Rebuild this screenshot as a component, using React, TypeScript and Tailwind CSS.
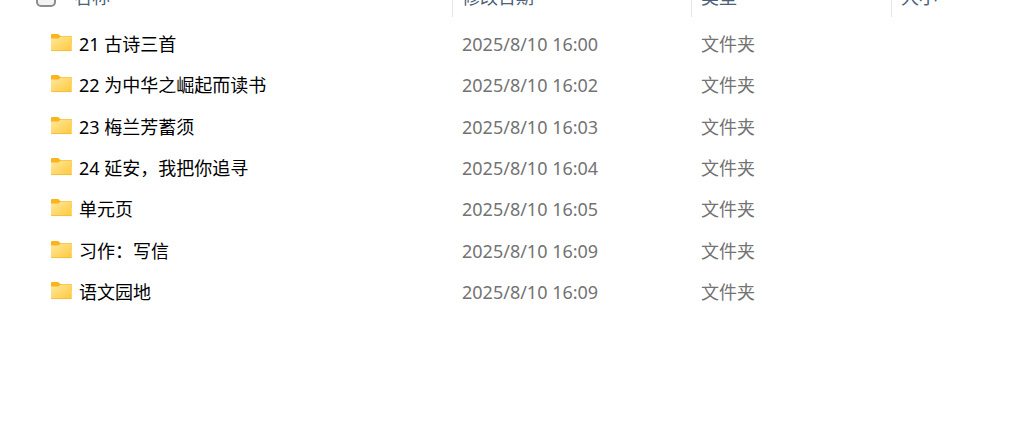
import React, { useState } from "react";

const files = [
  { name: "21 古诗三首", modified: "2025/8/10 16:00", type: "文件夹" },
  { name: "22 为中华之崛起而读书", modified: "2025/8/10 16:02", type: "文件夹" },
  { name: "23 梅兰芳蓄须", modified: "2025/8/10 16:03", type: "文件夹" },
  { name: "24 延安，我把你追寻", modified: "2025/8/10 16:04", type: "文件夹" },
  { name: "单元页", modified: "2025/8/10 16:05", type: "文件夹" },
  { name: "习作：写信", modified: "2025/8/10 16:09", type: "文件夹" },
  { name: "语文园地", modified: "2025/8/10 16:09", type: "文件夹" },
];

function FolderIcon() {
  return (
    <svg width="22" height="20" viewBox="-0.5 0 22 20" className="shrink-0" aria-hidden="true">
      <defs>
        <linearGradient id="folder-front" x1="0" y1="0" x2="1" y2="1">
          <stop offset="0" stopColor="#ffe8a0" />
          <stop offset="1" stopColor="#fec93a" />
        </linearGradient>
      </defs>
      <path
        d="M0.5 1Q0.5 0 1.5 0H7.2Q7.9 0 8.4 0.6L9.7 2H20.5Q21.3 2 21.3 3V9H0.5Z"
        fill="#fab51d"
      />
      <path
        d="M0.5 4.6H7.4Q8.1 4.6 8.6 4.1L9.7 3Q10.1 2.6 10.8 2.6H20.5Q21.3 2.6 21.3 3.4V16.2Q21.3 17 20.5 17H1.3Q0.5 17 0.5 16.2Z"
        fill="url(#folder-front)"
      />
      <path d="M0.7 16.6H21.1" fill="none" stroke="#edb43c" strokeWidth="0.7" />
    </svg>
  );
}

function HeaderCell({ label, divider = true, children }: any) {
  return (
    <th scope="col" className="p-0 pb-[6px] font-normal">
      <div
        className={
          divider
            ? "flex h-[17px] items-end overflow-hidden border-r border-[#e5e5e5]"
            : "flex h-[17px] items-end overflow-hidden"
        }
      >
        {children}
        <button type="button" className="pb-2 pl-[9px] text-left leading-6 text-[#4c607a]">
          {label}
        </button>
      </div>
    </th>
  );
}

export default function App() {
  const [allChecked, setAllChecked] = useState(false);

  return (
    <main className="min-h-screen bg-white font-['Noto_Sans','Noto_Sans_CJK_SC',sans-serif] text-[18px]">
      <table className="h-[313px] w-full table-fixed border-collapse text-left">
        <colgroup>
          <col className="w-[453px]" />
          <col className="w-[239px]" />
          <col className="w-[200px]" />
          <col />
        </colgroup>
        <thead>
          <tr>
            <HeaderCell label="名称">
              <input
                type="checkbox"
                aria-label="全选"
                checked={allChecked}
                onChange={() => setAllChecked(!allChecked)}
                className="mb-[10px] ml-9 mr-[9px] size-5 shrink-0 appearance-none rounded-[5px] border-2 border-[#8c8c8c] bg-[#f3f3f3] checked:bg-[#0067c0]"
              />
            </HeaderCell>
            <HeaderCell label="修改日期" />
            <HeaderCell label="类型" />
            <HeaderCell label="大小" divider={false} />
          </tr>
        </thead>
        <tbody className="text-[#737373]">
          {files.map((file) => (
            <tr key={file.name}>
              <td className="p-0 pl-[50px] text-black">
                <div className="flex items-center gap-[7px] leading-6">
                  <FolderIcon />
                  {file.name}
                </div>
              </td>
              <td className="p-0 pl-[9px] leading-6">{file.modified}</td>
              <td className="p-0 pl-[9px] leading-6">{file.type}</td>
              <td className="p-0 pl-[9px] leading-6"></td>
            </tr>
          ))}
        </tbody>
      </table>
    </main>
  );
}
